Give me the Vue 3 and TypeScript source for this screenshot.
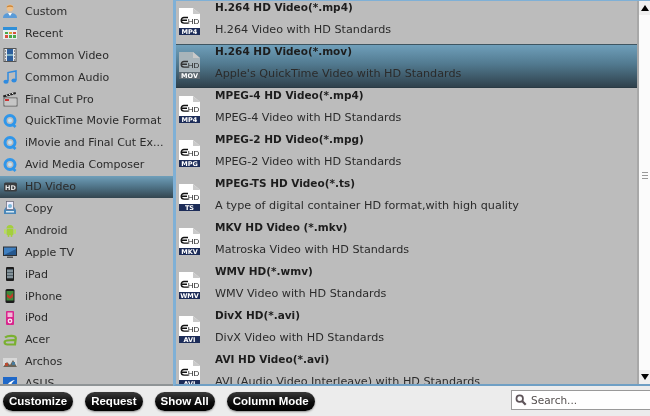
<template>
  <div class="app">
    <div class="main">
      <div class="side">
        <div v-for="cat in categories" :key="cat.label" class="cat" :class="{ 'cat--on': cat.label === 'HD Video' }">
          <svg class="cat-icon" width="16" height="16" viewBox="0 0 16 16">
            <template v-if="cat.icon === 'custom'">
              <path d="M1 15c0-4 3-5 7-5s7 1 7 5z" fill="#5a9bd8" />
              <path d="M6 10l2 3 2-3z" fill="#fff" />
              <circle cx="8" cy="5" r="3.4" fill="#f0c088" />
              <path d="M4.6 4.5C5 1.5 11 1.5 11.4 4.5 9.5 3.4 6.5 3.4 4.6 4.5z" fill="#c8843a" />
            </template>
            <template v-else-if="cat.icon === 'recent'">
              <rect x="1" y="2" width="14" height="12" fill="#e9eef0" />
              <rect x="1" y="2" width="14" height="3" fill="#2f8fd8" />
              <rect x="3" y="7" width="3" height="2" fill="#4aa84a" />
              <rect x="7" y="7" width="3" height="2" fill="#e0a030" />
              <rect x="11" y="7" width="3" height="2" fill="#d85040" />
              <rect x="3" y="10" width="3" height="3" fill="#d85040" />
              <rect x="7" y="10" width="3" height="3" fill="#4aa84a" />
              <rect x="11" y="10" width="3" height="3" fill="#4aa84a" />
            </template>
            <template v-else-if="cat.icon === 'video'">
              <rect x="2" y="1.5" width="12" height="13" fill="#e4e6ea" stroke="#555" />
              <rect x="5" y="2" width="6" height="12" fill="#2d5f9c" />
              <path d="M3 4h1M3 7h1M3 10h1M3 13h1M12 4h1M12 7h1M12 10h1M12 13h1" stroke="#333" />
              <path d="M5 8h6" stroke="#cfe" />
            </template>
            <template v-else-if="cat.icon === 'audio'">
              <path d="M6 12V3.5l8-1.5V11" fill="none" stroke="#2f8be0" stroke-width="1.5" />
              <ellipse cx="4" cy="12.8" rx="2.6" ry="2" fill="#2f8be0" />
              <ellipse cx="12" cy="11.6" rx="2.6" ry="2" fill="#2f8be0" />
            </template>
            <template v-else-if="cat.icon === 'fcp'">
              <rect x="2" y="7" width="13" height="8" fill="#eee" stroke="#444" stroke-width=".8" />
              <path d="M3 9h11M3 11h11M3 13h11" stroke="#888" stroke-width=".8" />
              <path d="M1.5 6.5L14 3 13.5 1 1 4.5z" fill="#222" />
              <path d="M4 3.8l1.5 1.2M7 3l1.5 1.2M10 2l1.5 1.2" stroke="#fff" />
              <rect x="3" y="8" width="4" height="2" fill="#c33" />
            </template>
            <template v-else-if="cat.icon === 'qt'">
              <circle cx="8" cy="7.5" r="5" fill="none" stroke="#2f96ea" stroke-width="3" />
              <circle cx="8" cy="7.5" r="2" fill="#bfe0f6" />
              <path d="M10 10.5l3.5 3.5" stroke="#2f96ea" stroke-width="2.6" />
            </template>
            <template v-else-if="cat.icon === 'hd'">
              <rect x="2" y="3.5" width="13" height="9" rx="1.5" fill="#3a3d3f" />
              <text x="8.5" y="11" class="hd-mini">HD</text>
            </template>
            <template v-else-if="cat.icon === 'copy'">
              <path d="M2 10l2-3h8l2 3v4H2z" fill="#4a87b8" />
              <rect x="4.5" y="1.5" width="7" height="8" fill="#eef" stroke="#667" stroke-width=".7" />
              <circle cx="8" cy="6" r="2" fill="#7bb6d8" />
              <rect x="4" y="11" width="8" height="1.5" fill="#d5e8f3" />
            </template>
            <template v-else-if="cat.icon === 'android'">
              <path d="M4.5 6.5a3.5 3.5 0 0 1 7 0z" fill="#a4cf3c" />
              <rect x="4.5" y="7" width="7" height="6" rx="1" fill="#a4cf3c" />
              <rect x="2" y="7" width="2" height="5" rx="1" fill="#b8dc60" />
              <rect x="12" y="7" width="2" height="5" rx="1" fill="#b8dc60" />
              <rect x="5.6" y="12" width="1.8" height="3" rx=".8" fill="#a4cf3c" />
              <rect x="8.6" y="12" width="1.8" height="3" rx=".8" fill="#a4cf3c" />
            </template>
            <template v-else-if="cat.icon === 'tv'">
              <rect x="1" y="2.5" width="14" height="9.5" fill="#2a2f35" />
              <rect x="2" y="3.5" width="12" height="7.5" fill="#3f7fc0" />
              <path d="M2 11l12-6v6z" fill="#25578e" />
              <rect x="5" y="12.5" width="6" height="1.5" fill="#555" />
            </template>
            <template v-else-if="cat.icon === 'ipad'">
              <rect x="4" y="1" width="8" height="14" rx="1" fill="#1c1c1c" />
              <rect x="5" y="3" width="6" height="9.5" fill="#50606a" />
              <path d="M5 5h6M5 8h6M5 11h6" stroke="#b8c4c8" />
            </template>
            <template v-else-if="cat.icon === 'iphone'">
              <rect x="3.5" y="1" width="9" height="14" rx="1.5" fill="#1c1c1c" />
              <rect x="4.5" y="3" width="7" height="9.5" fill="#3f8a3a" />
              <path d="M5 6l3 2 3-3v4l-3 2-3-2z" fill="#c23a28" />
            </template>
            <template v-else-if="cat.icon === 'ipod'">
              <rect x="4" y="1" width="8" height="14" rx="1" fill="#d8258c" />
              <rect x="5.5" y="2.5" width="5" height="4.5" fill="#f4b8d8" />
              <circle cx="8" cy="11" r="2.4" fill="#f8e0ee" />
              <circle cx="8" cy="11" r="1" fill="#d8258c" />
            </template>
            <template v-else-if="cat.icon === 'acer'">
              <path d="M3 5.5C5.5 3.5 13.5 3 13.8 6l-.8 6.5H5.5C2 12.5 1.5 9 5 8.5L12.5 8" fill="none" stroke="#7ab030" stroke-width="2.2" />
            </template>
            <template v-else-if="cat.icon === 'archos'">
              <rect x="1" y="4" width="14" height="9" fill="#d8d8d8" />
              <path d="M1 13l4-5 3 3 3-5 4 7z" fill="#6a6458" />
              <rect x="3" y="9" width="3" height="3" fill="#b84a30" />
              <rect x="10" y="8" width="3" height="3" fill="#4a7a9a" />
            </template>
            <template v-else>
              <rect x="1" y="1" width="14" height="15" fill="#1f68c8" />
              <path d="M3 13c2-5 5-8 10-9-3 2-4 4-4 7-2-1-4 0-6 2z" fill="#fff" />
            </template>
          </svg>
          <span class="cat-label">{{ cat.label }}</span>
        </div>
      </div>
      <div class="list">
        <div class="rows">
          <div v-for="fmt in formats" :key="fmt.title" class="row" :class="{ 'row--on': fmt.title === 'H.264 HD Video(*.mov)' }">
            <svg class="file" width="23" height="28" viewBox="0 0 23 28">
              <path d="M1 0h14l7 6v16H1z" class="file-page" />
              <path d="M15 0v6h7z" fill="#c9c9c9" />
              <path d="M10 9.5H6a2.8 2.8 0 0 0 0 5.6H10M4 12.3H9" fill="none" class="file-mark" stroke-width="1.4" />
              <text x="15.5" y="16" class="file-hd">HD</text>
              <rect x="1" y="20" width="21" height="7" class="file-tag" />
              <text x="11.5" y="26" class="file-ext">{{ fmt.ext }}</text>
            </svg>
            <div class="row-text">
              <div class="row-title">{{ fmt.title }}</div>
              <div class="row-desc">{{ fmt.desc }}</div>
            </div>
          </div>
        </div>
        <div class="scroll">
          <div class="scroll-btn"><span class="arrow arrow--up"></span></div>
          <div class="scroll-track"><span class="grip"></span></div>
          <div class="scroll-btn"><span class="arrow arrow--down"></span></div>
        </div>
      </div>
    </div>
    <div class="foot">
      <button v-for="b in buttons" :key="b" class="pill" type="button">{{ b }}</button>
      <div class="search">
        <svg width="12" height="12" viewBox="0 0 14 14">
          <circle cx="5.5" cy="5.5" r="3.8" fill="none" stroke="#5d5358" stroke-width="2" />
          <path d="M8.5 8.5l4 4" stroke="#5d5358" stroke-width="2.6" />
        </svg>
        <span>Search...</span>
      </div>
    </div>
  </div>
</template>

<script setup lang="ts">
const categories = [
  { label: 'Custom', icon: 'custom' },
  { label: 'Recent', icon: 'recent' },
  { label: 'Common Video', icon: 'video' },
  { label: 'Common Audio', icon: 'audio' },
  { label: 'Final Cut Pro', icon: 'fcp' },
  { label: 'QuickTime Movie Format', icon: 'qt' },
  { label: 'iMovie and Final Cut Ex...', icon: 'qt' },
  { label: 'Avid Media Composer', icon: 'qt' },
  { label: 'HD Video', icon: 'hd' },
  { label: 'Copy', icon: 'copy' },
  { label: 'Android', icon: 'android' },
  { label: 'Apple TV', icon: 'tv' },
  { label: 'iPad', icon: 'ipad' },
  { label: 'iPhone', icon: 'iphone' },
  { label: 'iPod', icon: 'ipod' },
  { label: 'Acer', icon: 'acer' },
  { label: 'Archos', icon: 'archos' },
  { label: 'ASUS', icon: 'asus' },
];

const formats = [
  { title: 'H.264 HD Video(*.mp4)', desc: 'H.264 Video with HD Standards', ext: 'MP4' },
  { title: 'H.264 HD Video(*.mov)', desc: "Apple's QuickTime Video with HD Standards", ext: 'MOV' },
  { title: 'MPEG-4 HD Video(*.mp4)', desc: 'MPEG-4 Video with HD Standards', ext: 'MP4' },
  { title: 'MPEG-2 HD Video(*.mpg)', desc: 'MPEG-2 Video with HD Standards', ext: 'MPG' },
  { title: 'MPEG-TS HD Video(*.ts)', desc: 'A type of digital container HD format,with high quality', ext: 'TS' },
  { title: 'MKV HD Video (*.mkv)', desc: 'Matroska Video with HD Standards', ext: 'MKV' },
  { title: 'WMV HD(*.wmv)', desc: 'WMV Video with HD Standards', ext: 'WMV' },
  { title: 'DivX HD(*.avi)', desc: 'DivX Video with HD Standards', ext: 'AVI' },
  { title: 'AVI HD Video(*.avi)', desc: 'AVI (Audio Video Interleave) with HD Standards', ext: 'AVI' },
];

const buttons = ['Customize', 'Request', 'Show All', 'Column Mode'];
</script>

<style>
html,
body {
  margin: 0;
  overflow: hidden;
}
</style>

<style scoped>
.app {
  width: 650px;
  height: 416px;
  display: flex;
  flex-direction: column;
  background: #ececec;
  font-family: "DejaVu Sans", "Liberation Sans", sans-serif;
  color: #2b2b2b;
  overflow: hidden;
  filter: blur(0.3px);
}

.main {
  height: 386px;
  display: flex;
  flex: 0 0 auto;
}

.side {
  width: 173px;
  flex: 0 0 auto;
  padding-top: 0.5px;
  background: #bcbcbc;
  border-bottom: 2px solid #8f9496;
  box-sizing: border-box;
  overflow: hidden;
}

.cat {
  height: 21.9px;
  display: flex;
  align-items: center;
  gap: 7px;
  padding-left: 2px;
  font-size: 11px;
  white-space: nowrap;
}

.cat--on {
  background: linear-gradient(180deg, #6f9fba 0%, #4f7387 50%, #33454f 100%);
}

.cat-icon {
  flex: 0 0 auto;
}

.hd-mini {
  font-size: 6.5px;
  font-weight: 700;
  fill: #e8e8e8;
  text-anchor: middle;
}

.list {
  flex: 1;
  display: flex;
  min-width: 0;
  border-top: 1px solid #7fb0d6;
  border-left: 3px solid #7fb0d6;
  border-bottom: 2px solid #6f9fc4;
  box-sizing: border-box;
  background: #bcbcbc;
}

.rows {
  flex: 1;
  min-width: 0;
  overflow: hidden;
  border-right: 2px solid #a8a8a8;
}

.row {
  height: 44px;
  display: flex;
  gap: 14px;
  padding: 1px 0 0 2px;
  box-sizing: border-box;
}

.row:first-child {
  margin-top: -1px;
}

.row--on {
  padding-top: 0;
  background: linear-gradient(180deg, #6f9fba 0%, #527a90 45%, #2f414c 100%);
  border-top: 1px solid #3f5561;
  border-bottom: 1px solid #2a3a44;
}

.file {
  flex: 0 0 auto;
  margin-top: 7px;
}

.file-page {
  fill: #ffffff;
}

.file-mark {
  stroke: #111;
}

.file-hd {
  font-size: 8px;
  fill: #222;
  text-anchor: middle;
  font-family: "Liberation Sans", sans-serif;
}

.file-tag {
  fill: #1c2c58;
}

.file-ext {
  font-size: 6.5px;
  font-weight: 700;
  fill: #fff;
  text-anchor: middle;
  font-family: "DejaVu Sans", sans-serif;
}

.row--on .file-page {
  fill: #a8b4ba;
}

.row--on .file-tag {
  fill: #5c6870;
}

.row--on .file-mark {
  stroke: #333;
}

.row-text {
  min-width: 0;
  white-space: nowrap;
}

.row-title {
  height: 14px;
  margin-top: -1px;
  line-height: 14px;
  font-size: 10.5px;
  font-weight: 700;
  color: #1d1d1d;
}

.row-desc {
  margin-top: 8px;
  height: 16px;
  line-height: 16px;
  font-size: 11.2px;
}

.scroll {
  width: 11px;
  flex: 0 0 auto;
  display: flex;
  flex-direction: column;
  background: #fbfbfb;
}

.scroll-btn {
  height: 14px;
  display: flex;
  align-items: center;
  justify-content: center;
  background: #efefef;
}

.scroll-track {
  flex: 1;
  display: flex;
  align-items: center;
  justify-content: center;
}

.grip {
  width: 6px;
  height: 5px;
  border-top: 1px solid #999;
  border-bottom: 1px solid #999;
  background: linear-gradient(#999, #999) center / 100% 1px no-repeat;
  margin-bottom: 34px;
}

.arrow {
  width: 0;
  height: 0;
  border-left: 4px solid transparent;
  border-right: 4px solid transparent;
}

.arrow--up {
  border-bottom: 6px solid #000;
}

.arrow--down {
  border-top: 6px solid #000;
}

.foot {
  flex: 1;
  display: flex;
  align-items: center;
  gap: 12px;
  padding-left: 3px;
}

.pill {
  height: 19px;
  margin: 0;
  padding: 0 6px;
  border: none;
  border-radius: 10px;
  background: linear-gradient(180deg, #3a3a3a 0%, #0c0c0c 55%, #000 100%);
  box-shadow: 0 1px 2px rgba(0, 0, 0, 0.4);
  color: #fff;
  font-family: "Liberation Sans", sans-serif;
  font-size: 11.5px;
  font-weight: 700;
  white-space: nowrap;
}

.search {
  margin-left: auto;
  width: 139px;
  height: 20px;
  margin-top: -2px;
  display: flex;
  align-items: center;
  gap: 4px;
  padding-left: 3px;
  box-sizing: border-box;
  background: #fff;
  border: 1px solid #9a9a9a;
  border-right: none;
  font-size: 10.5px;
  color: #55504f;
}
</style>
